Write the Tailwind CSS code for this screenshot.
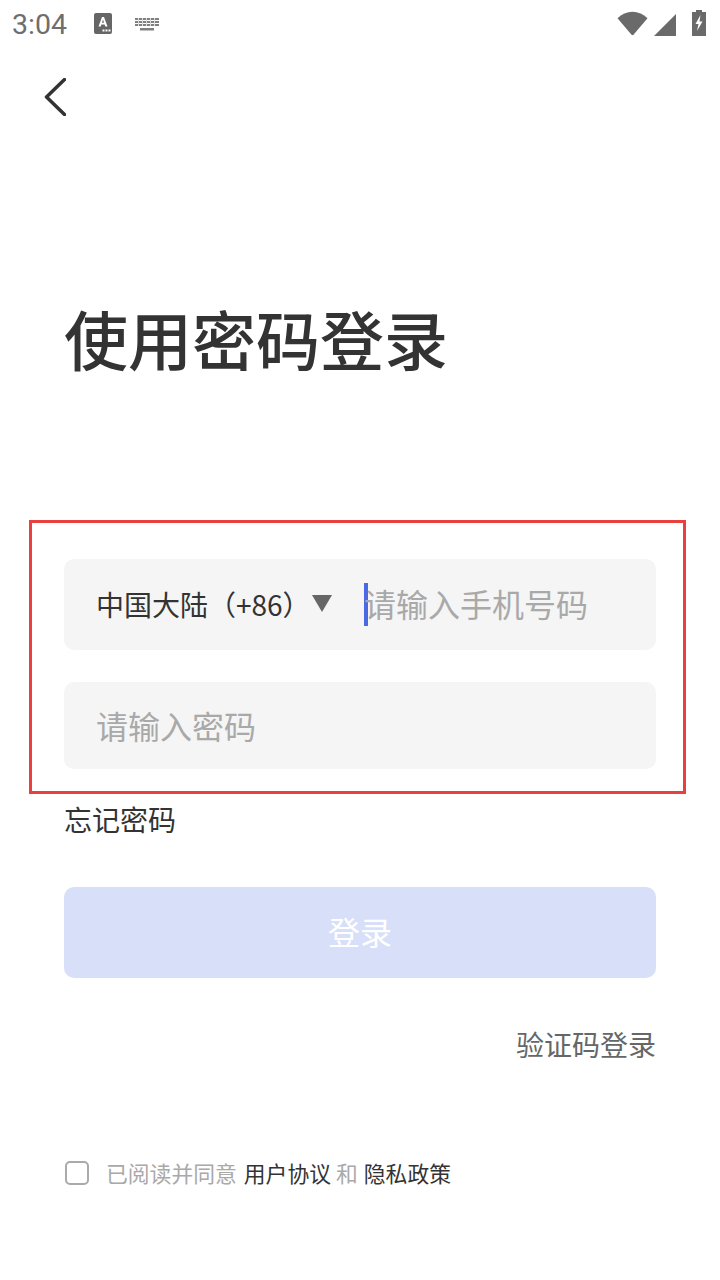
<!DOCTYPE html>
<html lang="zh-CN">
<head>
    <meta charset="UTF-8">
    <meta name="viewport" content="width=device-width, initial-scale=1.0">
    <title>使用密码登录</title>
    <script src="https://cdn.jsdelivr.net/npm/@tailwindcss/browser@4"></script>
</head>
<body class="bg-white font-['Noto_Sans_CJK_SC','Noto_Sans',sans-serif]">
    <div class="relative w-[720px] h-[1280px] overflow-hidden">
        <!-- status bar -->
        <div class="flex items-start h-[50px] pl-[12px] pr-[14px] text-[#6e6e6e]">
            <span class="font-['Roboto',sans-serif] text-[28.5px] leading-[50px] w-[82px]">3:04</span>
            <svg class="w-[18px] h-[21px] mt-[13px]" viewBox="0 0 18 21">
                <rect width="18" height="21" rx="2" fill="#666"/>
                <path d="M4.5 13.5 L8 4 H10 L13.5 13.5 H11.3 L10.6 11.5 H7.4 L6.7 13.5 Z M8 9.7 H10 L9 6.5 Z" fill="#fff" fill-rule="evenodd"/>
                <rect x="8.5" y="16.5" width="2" height="2" fill="#fff"/><rect x="11.5" y="16.5" width="2" height="2" fill="#fff"/><rect x="14.5" y="16.5" width="2" height="2" fill="#fff"/>
            </svg>
            <svg class="w-[24px] h-[13px] ml-[23px] mt-[18px]" viewBox="0 0 24 13" fill="#808080">
                <path d="M0 0 H24 V2 H0 Z M0 3 H24 V5 H0 Z M0 6 H24 V8 H0 Z" />
                <path d="M3.5 0 V8 M7.5 0 V8 M11.5 0 V8 M15.5 0 V8 M19.5 0 V8" stroke="#ddd" stroke-width="1"/>
                <rect x="5" y="10" width="14" height="2.5"/>
            </svg>
            <div class="flex-1"></div>
            <svg class="w-[31px] h-[25px] mt-[11px]" viewBox="0 0 32 25"><path d="M0.5 7 C9 -2 23 -2 31.5 7 L17 24 Q16 25 15 24 Z" fill="#6a6a6a"/></svg>
            <svg class="w-[22px] h-[22px] ml-[6px] mt-[14px]" viewBox="0 0 22 22"><path d="M0 22 L22 0 V22 Z" fill="#6a6a6a"/></svg>
            <svg class="w-[14px] h-[26px] ml-[16px] mt-[10px]" viewBox="0 0 14 26">
                <path d="M4 0 H10 V2 H14 V26 H0 V2 H4 Z" fill="#6a6a6a"/>
                <path d="M8.5 5 L3.5 14 H6.5 L5 21 L10.5 11.5 H7.5 Z" fill="#fff"/>
            </svg>
        </div>

        <!-- back -->
        <div class="pl-[44px] pt-[28px] h-[62px]">
            <svg class="w-[22px] h-[38px]" viewBox="0 0 22 38" fill="none" stroke="#333" stroke-width="3.5" stroke-linecap="round" stroke-linejoin="round"><path d="M20.5 1.5 L2.5 19 L20.5 36.5"/></svg>
        </div>

        <div class="px-[64px]">
            <h1 class="mt-[179px] h-[93px] text-[64px] leading-[92px] font-medium text-[#333]">使用密码登录</h1>

            <div class="mt-[175px] h-[91px] bg-[#f5f5f5] rounded-[10px] flex items-center pl-[32px] pb-[3px]">
                <span class="text-[28px] text-[#333] w-[216px] mt-[1px] whitespace-nowrap">中国大陆（+86）</span>
                <svg class="w-[20px] h-[17px]" viewBox="0 0 20 17"><path d="M0 0 H20 L10 17 Z" fill="#666"/></svg>
                <div class="w-[4px] h-[43px] bg-[#4a69e2] ml-[32px] mt-[3px]"></div>
                <span class="text-[32px] text-[#a9a9a9] -ml-[4px] whitespace-nowrap">请输入手机号码</span>
            </div>

            <div class="mt-[32px] h-[87px] bg-[#f5f5f5] rounded-[10px] flex items-center pl-[32px] pb-[2px]">
                <span class="text-[32px] text-[#a9a9a9]">请输入密码</span>
            </div>

            <div class="mt-[30px] h-[41px] text-[28px] leading-[40px] text-[#333]">忘记密码</div>

            <div class="mt-[47px] h-[91px] bg-[#d8dff8] rounded-[10px] flex items-center justify-center text-[32px] text-white pb-[4px]">登录</div>

            <div class="mt-[46px] h-[41px] text-right text-[28px] leading-[40px] text-[#666]">验证码登录</div>

            <div class="mt-[88px] flex items-center h-[40px] text-[21.8px] whitespace-nowrap">
                <div class="w-[24px] h-[24px] border-2 border-[#aaa] rounded-[5px] mr-[17px] ml-[1px]"></div>
                <span class="text-[#a9a9a9]">已阅读并同意</span>
                <span class="text-[#333] ml-[7px]">用户协议</span>
                <span class="text-[#a9a9a9] ml-[5px]">和</span>
                <span class="text-[#333] ml-[6px]">隐私政策</span>
            </div>
        </div>

        <!-- red highlight over the fields -->
        <div class="absolute left-[29px] top-[520px] w-[657px] h-[274px] border-[3px] border-[#e8403f] pointer-events-none"></div>
    </div>
</body>
</html>
